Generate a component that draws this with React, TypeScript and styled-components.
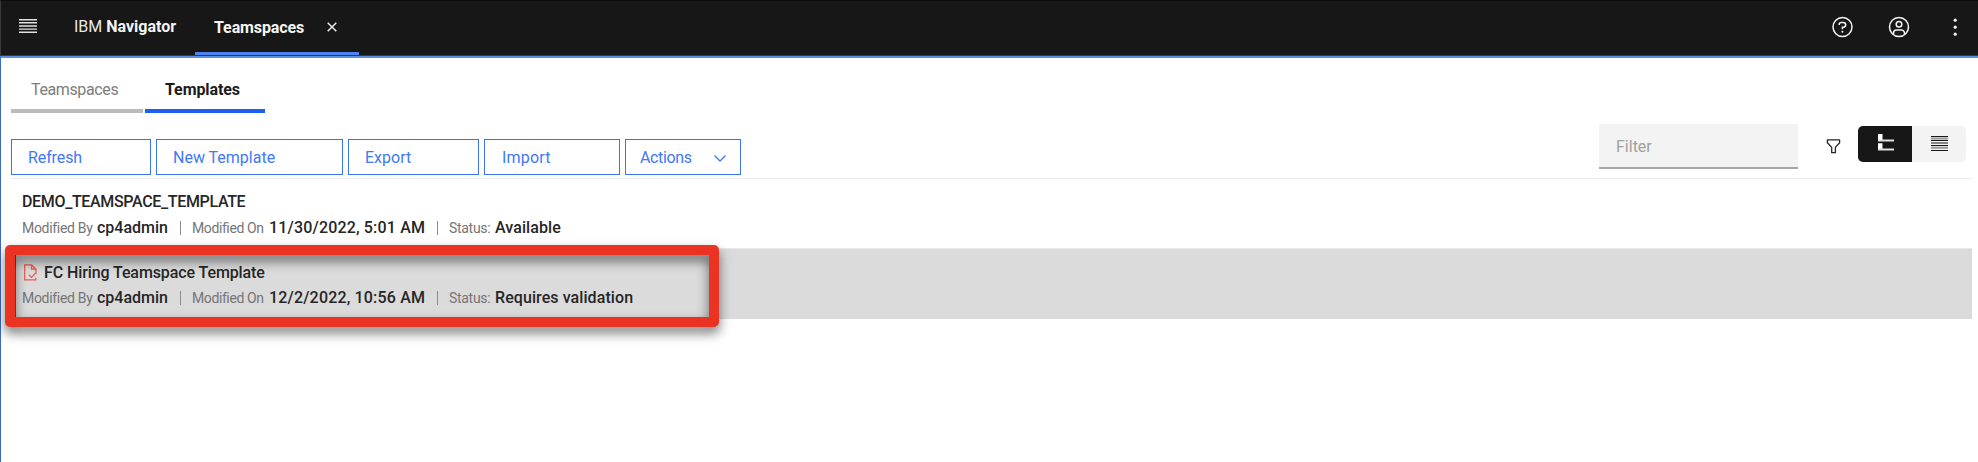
import React from "react";
import styled, { createGlobalStyle } from "styled-components";

const GlobalStyle = createGlobalStyle`
  *, *::before, *::after { box-sizing: border-box; }
  body {
    margin: 0;
    background: #fff;
    color: #262626;
    font: 400 16px/20px Roboto, "Liberation Sans", sans-serif;
  }
  button, input { font: inherit; margin: 0; }
`;

const Page = styled.div`
  position: relative;
  height: 462px;
  overflow: hidden;
  display: flex;
  flex-direction: column;
`;

const Header = styled.header`
  flex: none;
  height: 56px;
  display: flex;
  background: #171717;
  border-top: 1px solid #0c0c0c;
  border-bottom: 1px solid #333a4d;
  border-left: 1px solid #3a3a3a;
  color: #f4f4f4;
`;

const MenuButton = styled.button`
  width: 54px;
  padding: 18px 0 0 18px;
  border: 0;
  background: none;
  display: flex;
  align-items: flex-start;
`;

const Brand = styled.div`
  width: 139px;
  padding: 16px 0 0 19px;
  white-space: pre;
  color: #e8e8e8;
`;

const BrandName = styled.span`
  font-weight: 700;
  color: #f4f4f4;
`;

const HeaderTab = styled.div`
  width: 164px;
  height: 54px;
  margin-left: 1px;
  padding: 17px 22px 0 19px;
  display: flex;
  align-items: flex-start;
  justify-content: space-between;
  border-bottom: 3px solid #4f83f0;
  font-weight: 700;
  letter-spacing: -0.1px;
`;

const CloseIcon = styled.svg`
  margin-top: 4px;
`;

const HeaderTools = styled.div`
  margin-left: auto;
  display: flex;
  gap: 34px;
  padding: 15px 12px 0 0;
`;

const Content = styled.main`
  flex: 1;
  border-top: 2px solid #5a8ee0;
  border-left: 1px solid #3c69c4;
  padding: 0 6px 0 10px;
`;

const Tabs = styled.nav`
  display: flex;
  gap: 2px;
  height: 55px;
`;

const Tab = styled.div<{ $active?: boolean; $width: number }>`
  width: ${(p) => p.$width}px;
  padding: 22px 0 0 20px;
  border-bottom: 4px solid ${(p) => (p.$active ? "#1f5ff0" : "#bcbcbc")};
  color: ${(p) => (p.$active ? "#1c1c1c" : "#7d7d7d")};
  font-weight: ${(p) => (p.$active ? 700 : 400)};
  letter-spacing: ${(p) => (p.$active ? -0.1 : -0.38)}px;
`;

const Toolbar = styled.div`
  height: 66px;
  display: flex;
  align-items: flex-end;
  border-bottom: 1px solid #ededed;
`;

const ButtonRow = styled.div`
  display: flex;
  gap: 5px;
  padding-bottom: 3px;
`;

const ActionButton = styled.button<{ $width: number; $pad?: number; $spacing?: number }>`
  width: ${(p) => p.$width}px;
  height: 36px;
  padding: 2px 14px 0 ${(p) => p.$pad ?? 16}px;
  display: flex;
  align-items: center;
  justify-content: space-between;
  border: 1px solid #3b73f0;
  background: #fff;
  color: #4178f5;
  letter-spacing: ${(p) => p.$spacing ?? 0}px;
`;

const ToolbarRight = styled.div`
  margin-left: auto;
  display: flex;
  padding-right: 6px;
  align-items: flex-start;
  height: 54px;
`;

const FilterInput = styled.input`
  width: 199px;
  height: 45px;
  padding: 1px 17px 0;
  border: 0;
  border-bottom: 2px solid #a6a6a6;
  border-radius: 0;
  background: #f3f3f3;
  &::placeholder { color: #a0a0a0; opacity: 1; }
`;

const FilterIcon = styled.svg`
  margin: 15px 17px 0 28px;
`;

const Toggle = styled.div`
  display: flex;
  margin-top: 2px;
  height: 36px;
  border-radius: 5px;
  overflow: hidden;
  background: #f3f3f3;
`;

const ToggleItem = styled.div<{ $active?: boolean }>`
  width: 54px;
  padding: 8px 0 0 ${(p) => (p.$active ? 20 : 19)}px;
  background: ${(p) => (p.$active ? "#171717" : "#f3f3f3")};
  display: flex;
  align-items: flex-start;
`;

const Row = styled.article<{ $selected?: boolean }>`
  height: ${(p) => (p.$selected ? 71 : 69)}px;
  padding: ${(p) => (p.$selected ? 14 : 13)}px 0 0 11px;
  ${(p) => p.$selected && "background: #dbdbdb; border-top: 1px solid #e8e8e8;"}
`;

const RowTitle = styled.div<{ $height: number; $spacing: number }>`
  display: flex;
  height: ${(p) => p.$height}px;
  font-weight: 500;
  letter-spacing: ${(p) => p.$spacing}px;
`;

const TemplateIcon = styled.svg`
  margin: 1px 7px 0 2px;
`;

const Meta = styled.div`
  display: flex;
  white-space: nowrap;
`;

const Label = styled.span<{ $width: number; $spacing?: number }>`
  width: ${(p) => p.$width}px;
  font-size: 14px;
  line-height: 21px;
  color: #757575;
  letter-spacing: ${(p) => p.$spacing ?? -0.3}px;
`;

const Value = styled.span<{ $width?: number; $spacing?: number }>`
  ${(p) => p.$width && `width: ${p.$width}px;`}
  font-weight: 500;
  letter-spacing: ${(p) => p.$spacing ?? 0}px;
`;

const Divider = styled.span<{ $after: number }>`
  width: 1px;
  height: 14px;
  margin: 3px ${(p) => p.$after}px 0 0;
  background: #8c8c8c;
`;

const Highlight = styled.div`
  position: absolute;
  left: 5px;
  top: 245px;
  width: 714px;
  height: 82px;
  border: 10px solid #ea3323;
  border-radius: 5px;
  filter: drop-shadow(0 6px 6px rgba(0, 0, 0, 0.55));
`;

const SelectionEdge = styled.div`
  position: absolute;
  left: 15px;
  top: 255px;
  width: 1px;
  height: 62px;
  background: #3e5c94;
`;

interface MetaProps {
  date: string;
  status: string;
}

function MetaLine({ date, status }: MetaProps) {
  return (
    <Meta>
      <Label $width={75}>Modified By</Label>
      <Value $width={83}>cp4admin</Value>
      <Divider $after={11} />
      <Label $width={77} $spacing={-0.4}>Modified On</Label>
      <Value $width={168} $spacing={0.17}>{date}</Value>
      <Divider $after={11} />
      <Label $width={46}>Status:</Label>
      <Value $spacing={0.08}>{status}</Value>
    </Meta>
  );
}

export default function App() {
  return (
    <>
      <GlobalStyle />
      <Page>
        <Header>
          <MenuButton aria-label="Menu">
            <svg width="18" height="15" fill="#e2e2e2">
              <path d="M0 0h18v1.4H0zM0 3.1h18v1.4H0zM0 6.3h18v1.4H0zM0 9.4h18v1.4H0zM0 12.6h18v1.4H0z" />
            </svg>
          </MenuButton>
          <Brand>
            IBM <BrandName>Navigator</BrandName>
          </Brand>
          <HeaderTab>
            Teamspaces
            <CloseIcon width="10" height="10" stroke="#f0f0f0" strokeWidth="1.4">
              <path d="M.7.7l8.6 8.6M9.3.7L.7 9.3" />
            </CloseIcon>
          </HeaderTab>
          <HeaderTools>
            <svg width="22" height="22" fill="none" stroke="#f4f4f4" strokeWidth="1.5">
              <circle cx="10.5" cy="11" r="9.5" />
              <path d="M7.2 9V8.4a2 2 0 012-2h2.1a2.3 2.3 0 010 4.8h-.9v2.1" />
              <circle cx="10.4" cy="15.8" r="1" fill="#f4f4f4" stroke="none" />
            </svg>
            <svg width="22" height="22" fill="none" stroke="#f4f4f4" strokeWidth="1.5">
              <circle cx="11" cy="11" r="9.5" />
              <circle cx="11" cy="8.2" r="2.8" />
              <path d="M5.5 18.4v-1.2a3.1 3.1 0 013.1-3.1h4.8a3.1 3.1 0 013.1 3.1v1.2" />
            </svg>
            <svg width="22" height="22" fill="#f4f4f4">
              <circle cx="11.2" cy="4.2" r="1.6" />
              <circle cx="11.2" cy="11.2" r="1.6" />
              <circle cx="11.2" cy="18.2" r="1.6" />
            </svg>
          </HeaderTools>
        </Header>
        <Content>
          <Tabs>
            <Tab $width={132}>Teamspaces</Tab>
            <Tab $width={120} $active>Templates</Tab>
          </Tabs>
          <Toolbar>
            <ButtonRow>
              <ActionButton $width={140} $spacing={-0.1}>Refresh</ActionButton>
              <ActionButton $width={187}>New Template</ActionButton>
              <ActionButton $width={131}>Export</ActionButton>
              <ActionButton $width={136} $pad={17} $spacing={0.2}>Import</ActionButton>
              <ActionButton $width={116} $pad={14} $spacing={-0.35}>
                Actions
                <svg width="12" height="8" fill="none" stroke="#4178f5" strokeWidth="1.3">
                  <path d="M.5 1.5L6 7l5.5-5.5" />
                </svg>
              </ActionButton>
            </ButtonRow>
            <ToolbarRight>
              <FilterInput placeholder="Filter" />
              <FilterIcon width="15" height="15" fill="none" stroke="#262626" strokeWidth="1.3" strokeLinejoin="round">
                <path d="M1.4.8h12.2v2.9L9.4 8.4v5.3H5.7V8.4L1.4 3.7z" />
              </FilterIcon>
              <Toggle>
                <ToggleItem $active>
                  <svg width="17" height="18">
                    <path d="M0 0h4.5v6H0zM0 9.3h4.5v6H0z" fill="#fff" />
                    <path d="M0 5.5h16v2H0zM0 14.6h16v2H0z" fill="#e0e0e0" />
                  </svg>
                </ToggleItem>
                <ToggleItem>
                  <svg width="17" height="18">
                    <path d="M0 3.5h17v2H0zM0 12.8h17v2H0z" fill="#999" />
                    <path d="M0 2h17v1H0zM0 6.1h17v1H0zM0 8.6h17v1H0zM0 11.1h17v1H0zM0 15.9h17v1H0z" fill="#171717" />
                  </svg>
                </ToggleItem>
              </Toggle>
            </ToolbarRight>
          </Toolbar>
          <Row>
            <RowTitle $height={26} $spacing={-0.34}>DEMO_TEAMSPACE_TEMPLATE</RowTitle>
            <MetaLine date="11/30/2022, 5:01 AM" status="Available" />
          </Row>
          <Row $selected>
            <RowTitle $height={25} $spacing={-0.1}>
              <TemplateIcon width="13" height="17" fill="none" stroke="#e8604f" strokeWidth="1.3">
                <path d="M12 10V5L7.5.8H.7v15h11.1v-2M7.5.8V5H12M4.8 10.8l2.6 2.6 5-5.2" />
              </TemplateIcon>
              FC Hiring Teamspace Template
            </RowTitle>
            <MetaLine date="12/2/2022, 10:56 AM" status="Requires validation" />
          </Row>
        </Content>
        <SelectionEdge />
        <Highlight />
      </Page>
    </>
  );
}
